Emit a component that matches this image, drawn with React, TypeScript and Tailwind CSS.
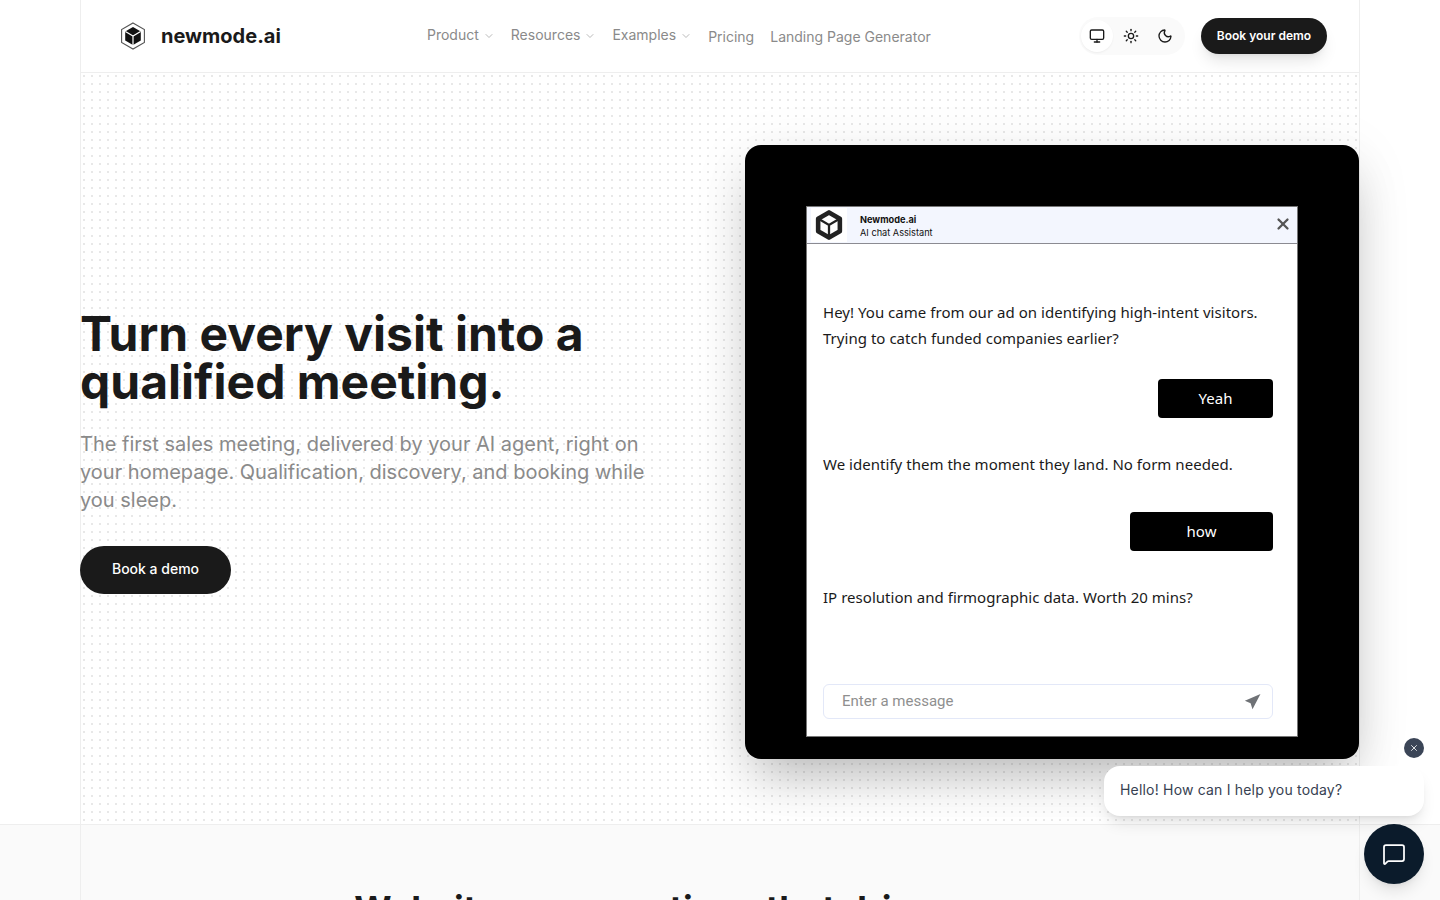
import { ChevronDown, Monitor, Sun, Moon, MessageSquare, X } from 'lucide-react';

function CubeLogo({ className }: { className?: string }) {
  return (
    <svg viewBox="0 0 26 28" className={className} fill="none">
      <path d="M13 1 24.4 7.6v12.8L13 27 1.6 20.4V7.6Z" stroke="#555" strokeWidth="1.1" />
      <path d="M13 5 20.8 9.5v9L13 23l-7.8-4.5v-9Z" fill="#111" />
      <path d="M5.4 9.6 13 14l7.6-4.4M13 14v9" stroke="#fff" strokeWidth="1.2" />
    </svg>
  );
}

function NavMenu({ label }: { label: string }) {
  return (
    <div className="flex items-center gap-[4px] -mt-[4px]">
      <span>{label}</span>
      <ChevronDown className="h-[12px] w-[12px] mt-[3px] text-[#a3a3a3]" strokeWidth={1.5} />
    </div>
  );
}

function ChatWindow() {
  return (
    <div className="w-[492px] h-[531px] bg-white border border-[#777] flex flex-col">
      <div className="h-[37px] bg-[#f3f6fe] border-b border-[#8b8b92] flex items-center pl-[4px] pr-[5px]">
        <div className="w-[36px] h-[34px] bg-white flex items-center justify-center">
          <svg viewBox="0 0 26 28" className="w-[30px] h-[32px] shrink-0" fill="none">
            <path d="M13 3 22.5 8.5v11L13 25l-9.5-5.5v-11Z" stroke="#222" strokeWidth="4" strokeLinejoin="round" />
            <path d="M4.5 9 13 14l8.5-5M13 14v10" stroke="#222" strokeWidth="2" />
          </svg>
        </div>
        <div className="ml-[13px] text-[9.2px] leading-[13px] text-[#111] pt-[1px]">
          <div className="font-bold">Newmode.ai</div>
          <div>AI chat Assistant</div>
        </div>
        <X className="ml-auto mb-[3px] h-[18px] w-[18px] text-[#555]" strokeWidth={3} />
      </div>

      <div className="flex-1 px-[16px] pt-[55px] text-[15px] leading-[26px] tracking-[0.03px] text-[#1a1a1a] font-['Noto_Sans',sans-serif]">
        <p>
          Hey! You came from our ad on identifying high-intent visitors.
          <br />
          Trying to catch funded companies earlier?
        </p>
        <div className="mt-[28px] mr-[8px] flex justify-end">
          <div className="w-[115px] h-[39px] pb-[2px] bg-black rounded-[4px] text-white flex items-center justify-center">Yeah</div>
        </div>
        <p className="mt-[33px]">We identify them the moment they land. No form needed.</p>
        <div className="mt-[35px] mr-[8px] flex justify-end">
          <div className="w-[143px] h-[39px] pb-[2px] bg-black rounded-[4px] text-white flex items-center justify-center">how</div>
        </div>
        <p className="mt-[33px]">IP resolution and firmographic data. Worth 20 mins?</p>
      </div>

      <div className="ml-[16px] mr-[24px] mb-[17px] h-[35px] rounded-[6px] border border-[#e3e8f8] flex items-center pl-[18px] pr-[11px]">
        <span className="text-[15px] text-[#8f8f8f] font-['Roboto',sans-serif]">Enter a message</span>
        <svg viewBox="0 0 16 16" className="ml-auto h-[17px] w-[17px]" fill="#6f7276">
          <path d="M15.5 1 .8 7.4l5.4 2.2L8 15.4Z" />
        </svg>
      </div>
    </div>
  );
}

export default function App() {
  return (
    <div className="h-[900px] overflow-hidden bg-white relative font-['Inter',sans-serif] [font-optical-sizing:none]">
      <div className="mx-[80px] border-x border-[#eeeeee]">
        {/* Nav */}
        <header className="h-[73px] border-b border-[#eeeeee] flex items-center pl-[39px] pr-[32px]">
          <div className="flex items-center gap-[15px] w-[307px]">
            <CubeLogo className="w-[26px] h-[28px]" />
            <span className="text-[20px] font-bold text-[#1a1a1a]">newmode.ai</span>
          </div>
          <nav className="flex items-center text-[14px] text-[#8a8a8a] gap-[16px]">
            <NavMenu label="Product" />
            <NavMenu label="Resources" />
            <NavMenu label="Examples" />
            <span>Pricing</span>
            <span>Landing Page Generator</span>
          </nav>
          <div className="ml-auto flex items-center gap-[16px]">
            <div className="h-[38px] w-[106px] rounded-full bg-[#fafafa] flex items-center pl-[1px]">
              <div className="h-[34px] w-[34px] flex items-center justify-center">
                <div className="h-[32px] w-[32px] rounded-full bg-white shadow-xs flex items-center justify-center">
                  <Monitor className="h-[16px] w-[16px] text-[#1a1a1a]" />
                </div>
              </div>
              <div className="h-[34px] w-[34px] flex items-center justify-center">
                <Sun className="h-[16px] w-[16px] text-[#1a1a1a]" />
              </div>
              <div className="h-[34px] w-[34px] flex items-center justify-center">
                <Moon className="h-[16px] w-[16px] text-[#1a1a1a]" />
              </div>
            </div>
            <button className="h-[36px] w-[126px] rounded-full bg-[#1a1a1a] text-white text-[12px] font-semibold shadow-lg">
              Book your demo
            </button>
          </div>
        </header>

        {/* Hero */}
        <section className="h-[751px] flex bg-[radial-gradient(#e8e8e8_1px,transparent_1.2px)] bg-[size:8px_8px] bg-[position:-1px_-1px]">
          <div className="w-[664px] -ml-[1px] pt-[237px]">
            <h1 className="text-[48px] leading-[48px] font-bold text-[#1a1a1a]">
              Turn every visit into a
              <br />
              qualified meeting.
            </h1>
            <p className="mt-[24px] text-[20px] leading-[28px] text-[#8a8a8a] w-[600px]">
              The first sales meeting, delivered by your AI agent, right on your homepage. Qualification, discovery, and booking while you sleep.
            </p>
            <button className="mt-[32px] h-[48px] w-[151px] rounded-full bg-[#1a1a1a] text-white text-[14px] font-medium pb-[3px]">
              Book a demo
            </button>
          </div>
          <div className="ml-auto mt-[72px] h-[614px] w-[614px] rounded-[16px] bg-black pt-[61px] pl-[61px] shadow-[0_25px_50px_-12px_rgba(0,0,0,0.25),0_10px_60px_rgba(0,0,0,0.08)]">
            <ChatWindow />
          </div>
        </section>
      </div>

      {/* Next section */}
      <div className="absolute inset-x-0 top-[824px] h-[76px] bg-[#fafafa] border-t border-[#eeeeee]">
        <div className="mx-[80px] h-full border-x border-[#eeeeee] flex justify-center pt-[64px]">
          <h2 className="text-[36px] leading-[40px] font-bold text-[#1a1a1a] whitespace-nowrap">Website conversations that drive revenue</h2>
        </div>
      </div>

      {/* Chat widget */}
      <div className="absolute right-[16px] bottom-[16px] flex flex-col items-end">
        <div className="h-[20px] w-[20px] mb-[8px] rounded-full bg-[#3b4557] flex items-center justify-center">
          <X className="h-[10px] w-[10px] text-white" />
        </div>
        <div className="w-[320px] h-[50px] rounded-[16px] bg-white shadow-lg flex items-center pl-[16px] pb-[4px] text-[14px] tracking-[0.19px] text-[#374151]">
          Hello! How can I help you today?
        </div>
        <div className="mt-[8px] h-[60px] w-[60px] rounded-full bg-[#0b1b2b] flex items-center justify-center shadow-lg">
          <MessageSquare className="h-[24px] w-[24px] text-white" strokeWidth={1.75} />
        </div>
      </div>
    </div>
  );
}
